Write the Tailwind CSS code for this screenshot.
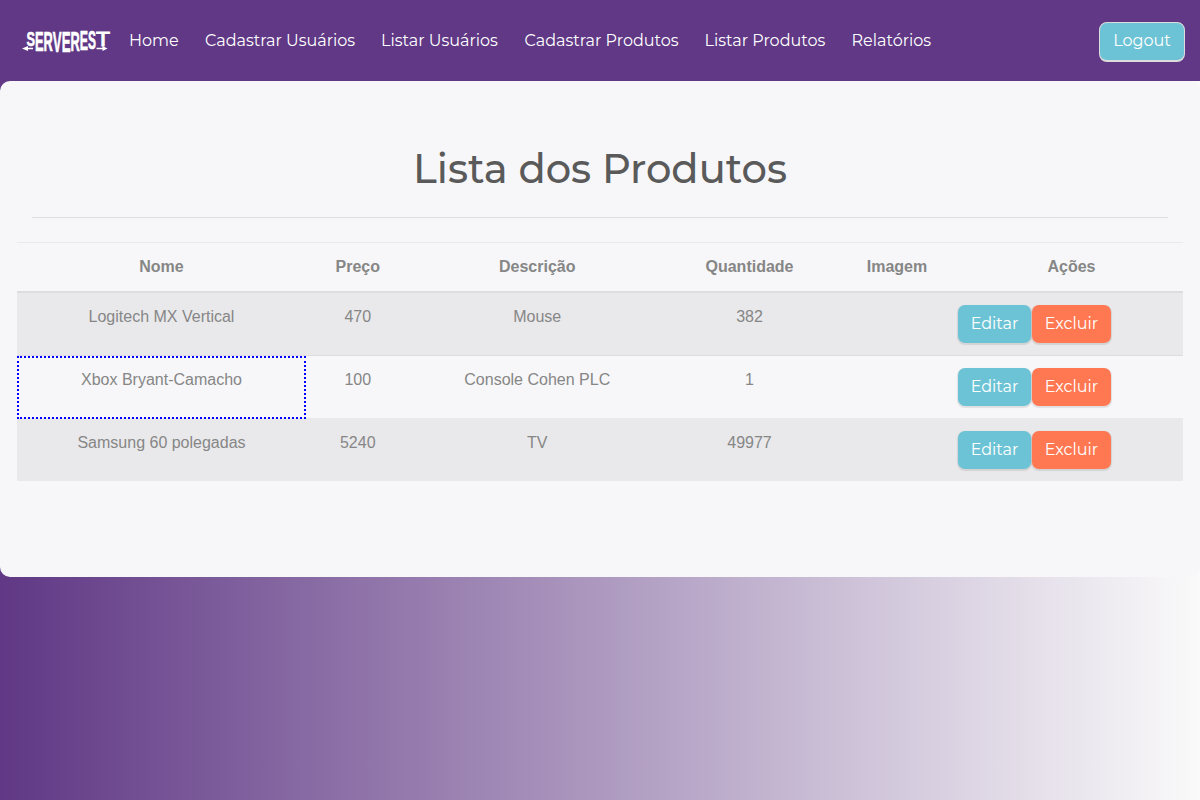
<!DOCTYPE html>
<html lang="pt-BR"><head><meta charset="utf-8"><title>ServeRest</title>
<script src="https://cdn.jsdelivr.net/npm/@tailwindcss/browser@4"></script></head>
<body class="h-screen overflow-hidden bg-linear-to-r/srgb from-[#603885] to-[#fafafa] text-[16px] leading-6 font-['Liberation_Sans',sans-serif] text-[#868686]">
<nav class="flex h-[81px] items-center bg-[#603885] pl-[21px] pr-[15px] font-[Montserrat,Inter,sans-serif] text-white">
  <svg class="mr-[18px] h-[28px] w-[90px] shrink-0 overflow-visible" viewBox="21 26 90 28" fill="#fff" font-family="Liberation Sans" font-weight="700">
    <text x="26.500" y="44.5" font-size="21" textLength="8.500" lengthAdjust="spacingAndGlyphs" stroke="#fff" stroke-width=".6">S</text>
    <text x="35" y="49.5" font-size="28" textLength="61" lengthAdjust="spacingAndGlyphs" stroke="#fff" stroke-width=".7">E<tspan>R</tspan><tspan dy="1" font-size="29">VE</tspan><tspan dy="-1">R</tspan><tspan dy="-.7" font-size="27">E</tspan><tspan dy="-.5" font-size="26">S</tspan></text>
    <text x="96" y="44.5" font-size="20" font-weight="400" textLength="14" lengthAdjust="spacingAndGlyphs" stroke="#fff" stroke-width=".9">T</text>
    <path d="M22 47.500l6-2.500v1.800h5v1.400h-5v1.800zM107.500 47.500l-5-2.500v1.800h-6v1.400h6v1.800z"/>
  </svg>
  <div class="flex gap-[26px] whitespace-nowrap">
    <a class="w-[50px]">Home</a><a class="w-[150px]">Cadastrar Usuários</a><a class="w-[117.500px]">Listar Usuários</a><a class="w-[154px]">Cadastrar Produtos</a><a class="w-[121px]">Listar Produtos</a><a class="w-[80px]">Relatórios</a>
  </div>
  <button class="ml-auto mt-[3px] h-[40px] w-[86px] rounded-[8px] border border-b-2 border-[#dcdcdc] bg-[#6cc3d5] pb-px">Logout</button>
</nav>
<main class="h-[496px] rounded-[10px] bg-[#f7f7f9] px-[17px] pt-[64px]">
  <h1 class="h-[48px] text-center font-[Montserrat,Inter,sans-serif] text-[40px] leading-[48px] font-medium text-[#5a5a5a]">Lista dos Produtos</h1>
  <hr class="mx-[15px] mt-[24px] mb-[24px] border-[#dedee0]">
  <div class="grid grid-cols-[289px_103.5px_255.5px_169px_126px_223px] text-center">
    <div class="col-span-6 grid h-[49px] grid-cols-subgrid border-t border-[#e9e9eb] pt-[12px] font-bold"><b>Nome</b><b>Preço</b><b>Descrição</b><b>Quantidade</b><b>Imagem</b><b>Ações</b></div>
    <div class="col-span-6 grid h-[64px] grid-cols-subgrid border-t-2 border-[#dddde0] bg-[#e9e9eb] pt-[12px]"><p>Logitech MX Vertical</p><p>470</p><p>Mouse</p><p>382</p><p></p>
      <div class="-ml-[2px] flex gap-px font-[Montserrat,Inter,sans-serif] text-white"><button class="h-[38px] w-[73px] rounded-[7px] bg-[#6cc3d5] shadow-[0_1px_1px_1px_#00000018]">Editar</button><button class="h-[38px] w-[79px] rounded-[7px] bg-[#ff7851] shadow-[0_1px_1px_1px_#00000018]">Excluir</button></div></div>
    <div class="col-span-6 grid h-[63px] grid-cols-subgrid border-t border-[#dddde0]"><p class="relative z-10 h-[63px] border-2 border-dotted border-[#0000ff] pt-[10px]">Xbox Bryant-Camacho</p><p class="pt-[12px]">100</p><p class="pt-[12px]">Console Cohen PLC</p><p class="pt-[12px]">1</p><p></p>
      <div class="-ml-[2px] flex gap-px pt-[12px] font-[Montserrat,Inter,sans-serif] text-white"><button class="h-[38px] w-[73px] rounded-[7px] bg-[#6cc3d5] shadow-[0_1px_1px_1px_#00000018]">Editar</button><button class="h-[38px] w-[79px] rounded-[7px] bg-[#ff7851] shadow-[0_1px_1px_1px_#00000018]">Excluir</button></div></div>
    <div class="col-span-6 grid h-[63px] grid-cols-subgrid bg-[#e9e9eb] pt-[13px]"><p>Samsung 60 polegadas</p><p>5240</p><p>TV</p><p>49977</p><p></p>
      <div class="-ml-[2px] flex gap-px font-[Montserrat,Inter,sans-serif] text-white"><button class="h-[38px] w-[73px] rounded-[7px] bg-[#6cc3d5] shadow-[0_1px_1px_1px_#00000018]">Editar</button><button class="h-[38px] w-[79px] rounded-[7px] bg-[#ff7851] shadow-[0_1px_1px_1px_#00000018]">Excluir</button></div></div>
  </div>
</main>
</body></html>
